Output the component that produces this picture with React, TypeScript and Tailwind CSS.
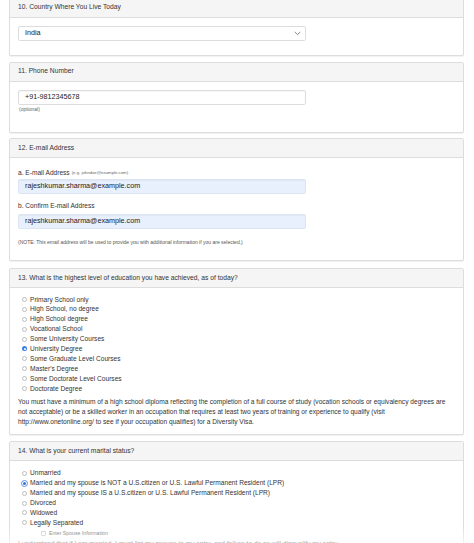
import type { ReactNode } from "react";

function Panel({ title, children, bodyClassName = "", className = "" }: { title: string; children: ReactNode; bodyClassName?: string; className?: string }) {
  return (
    <div className={`rounded-[2px] border border-[#dddddd] bg-white shadow-[0_1px_1px_rgba(0,0,0,0.06)] ${className}`}>
      <div className="flex h-[19px] items-center border-b border-[#dddddd] bg-[#f5f5f5] px-[8px] text-[6.7px] text-[#333333]">
        {title}
      </div>
      <div className={`px-[8px] ${bodyClassName}`}>{children}</div>
    </div>
  );
}

function Radio({ label, checked = false, focus = false }: { label: string; checked?: boolean; focus?: boolean }) {
  return (
    <div className="flex h-[9.9px] items-center text-[6.6px] text-[#333333]">
      <span className="flex w-[11px] justify-center pl-[2px]">
        {focus ? (
          <span className="flex h-[7px] w-[7px] items-center justify-center rounded-full border border-[#5b8fe6] bg-white">
            <span className="h-[3px] w-[3px] rounded-full bg-[#2f6fdc]" />
          </span>
        ) : checked ? (
          <span className="flex h-[5px] w-[5px] items-center justify-center rounded-full bg-[#3b7de8]">
            <span className="h-[2px] w-[2px] rounded-full bg-white" />
          </span>
        ) : (
          <span className="h-[5px] w-[5px] rounded-full border border-[#bdbdbd] bg-white" />
        )}
      </span>
      <span className="ml-[1px]">{label}</span>
    </div>
  );
}

function TextBox({ value, autofill = false }: { value: string; autofill?: boolean }) {
  return (
    <div
      className={`flex h-[15px] w-[288px] items-center rounded-[2px] border px-[6px] text-[7.2px] text-[#222222] shadow-[inset_0_1px_1px_rgba(0,0,0,0.04)] ${
        autofill ? "border-[#dde5f2] bg-[#e8f0fe]" : "border-[#dddddd] bg-white"
      }`}
    >
      {value}
    </div>
  );
}

const education = [
  "Primary School only",
  "High School, no degree",
  "High School degree",
  "Vocational School",
  "Some University Courses",
  "University Degree",
  "Some Graduate Level Courses",
  "Master's Degree",
  "Some Doctorate Level Courses",
  "Doctorate Degree",
];

const marital = [
  "Unmarried",
  "Married and my spouse is NOT a U.S.citizen or U.S. Lawful Permanent Resident (LPR)",
  "Married and my spouse IS a U.S.citizen or U.S. Lawful Permanent Resident (LPR)",
  "Divorced",
  "Widowed",
  "Legally Separated",
];

export default function App() {
  return (
    <div className="relative h-[543px] overflow-hidden bg-white font-[family-name:'Liberation_Sans',Arial,sans-serif]">
      <div className="-mt-[2.5px] flex flex-col gap-[5.5px] pl-[9px] pr-[10px]">
        <Panel title="10. Country Where You Live Today" bodyClassName="pt-[8.5px] pb-[14px]">
          <div className="flex h-[15px] w-[288px] items-center justify-between rounded-[2px] border border-[#dddddd] bg-white pl-[6px] pr-[4px] text-[7.2px] text-[#222222]">
            <span>India</span>
            <svg width="7" height="5" viewBox="0 0 7 5" fill="none">
              <path d="M1 1.2 L3.5 3.6 L6 1.2" stroke="#777777" strokeWidth="0.9" strokeLinecap="round" strokeLinejoin="round" />
            </svg>
          </div>
        </Panel>

        <Panel title="11. Phone Number" bodyClassName="pt-[8px] pb-[19px]">
          <TextBox value="+91-9812345678" />
          <div className="mt-[1px] h-[7px] pl-[1px] text-[5px] leading-[7px] text-[#666666]">(optional)</div>
        </Panel>

        <Panel title="12. E-mail Address" bodyClassName="pt-[10px] pb-[14px]">
          <div className="flex h-[10px] items-center text-[6.6px] text-[#333333]">
            a. E-mail Address
            <span className="ml-[2px] text-[4.3px] text-[#666666]">(e.g. johndoe@example.com)</span>
          </div>
          <div className="mt-[1px]">
            <TextBox value="rajeshkumar.sharma@example.com" autofill />
          </div>
          <div className="mt-[7px] flex h-[10px] items-center text-[6.6px] text-[#333333]">b. Confirm E-mail Address</div>
          <div className="mt-[3px]">
            <TextBox value="rajeshkumar.sharma@example.com" autofill />
          </div>
          <div className="mt-[9px] h-[8px] text-[5px] leading-[8px] text-[#555555]">
            (NOTE: This email address will be used to provide you with additional information if you are selected.)
          </div>
        </Panel>

        <Panel
          title="13. What is the highest level of education you have achieved, as of today?"
          className="mt-[1.5px]"
          bodyClassName="pt-[6.5px] pb-[7.5px]"
        >
          <div>
            {education.map((e) => (
              <Radio key={e} label={e} checked={e === "University Degree"} />
            ))}
          </div>
          <p className="mt-[3.5px] text-[6.6px] leading-[10px] text-[#333333]">
            You must have a minimum of a high school diploma reflecting the completion of a full course of study (vocation schools or equivalency degrees are not acceptable) or be a skilled worker in an occupation that requires at least two years of training or experience to qualify (visit http://www.onetonline.org/ to see if your occupation qualifies) for a Diversity Visa.
          </p>
        </Panel>

        <Panel title="14. What is your current marital status?" bodyClassName="pt-[7.5px] pb-[10px]">
          <div>
            {marital.map((m, i) => (
              <Radio key={m} label={m} focus={i === 1} />
            ))}
          </div>
          <div className="mt-[1px] flex h-[10px] items-center pl-[23px] text-[5.2px] text-[#666666]">
            <span className="mr-[3px] h-[5px] w-[5px] rounded-[1px] border border-[#c8c8c8] bg-white" />
            Enter Spouse Information
          </div>
          <p className="text-[6.6px] leading-[10px] text-[#333333]">
            I understand that if I am married, I must list my spouse in my entry, and failure to do so will disqualify my entry.
          </p>
        </Panel>
      </div>
      <div className="pointer-events-none absolute inset-x-0 bottom-0 h-[18px] bg-gradient-to-b from-white/0 to-white/60" />
    </div>
  );
}
